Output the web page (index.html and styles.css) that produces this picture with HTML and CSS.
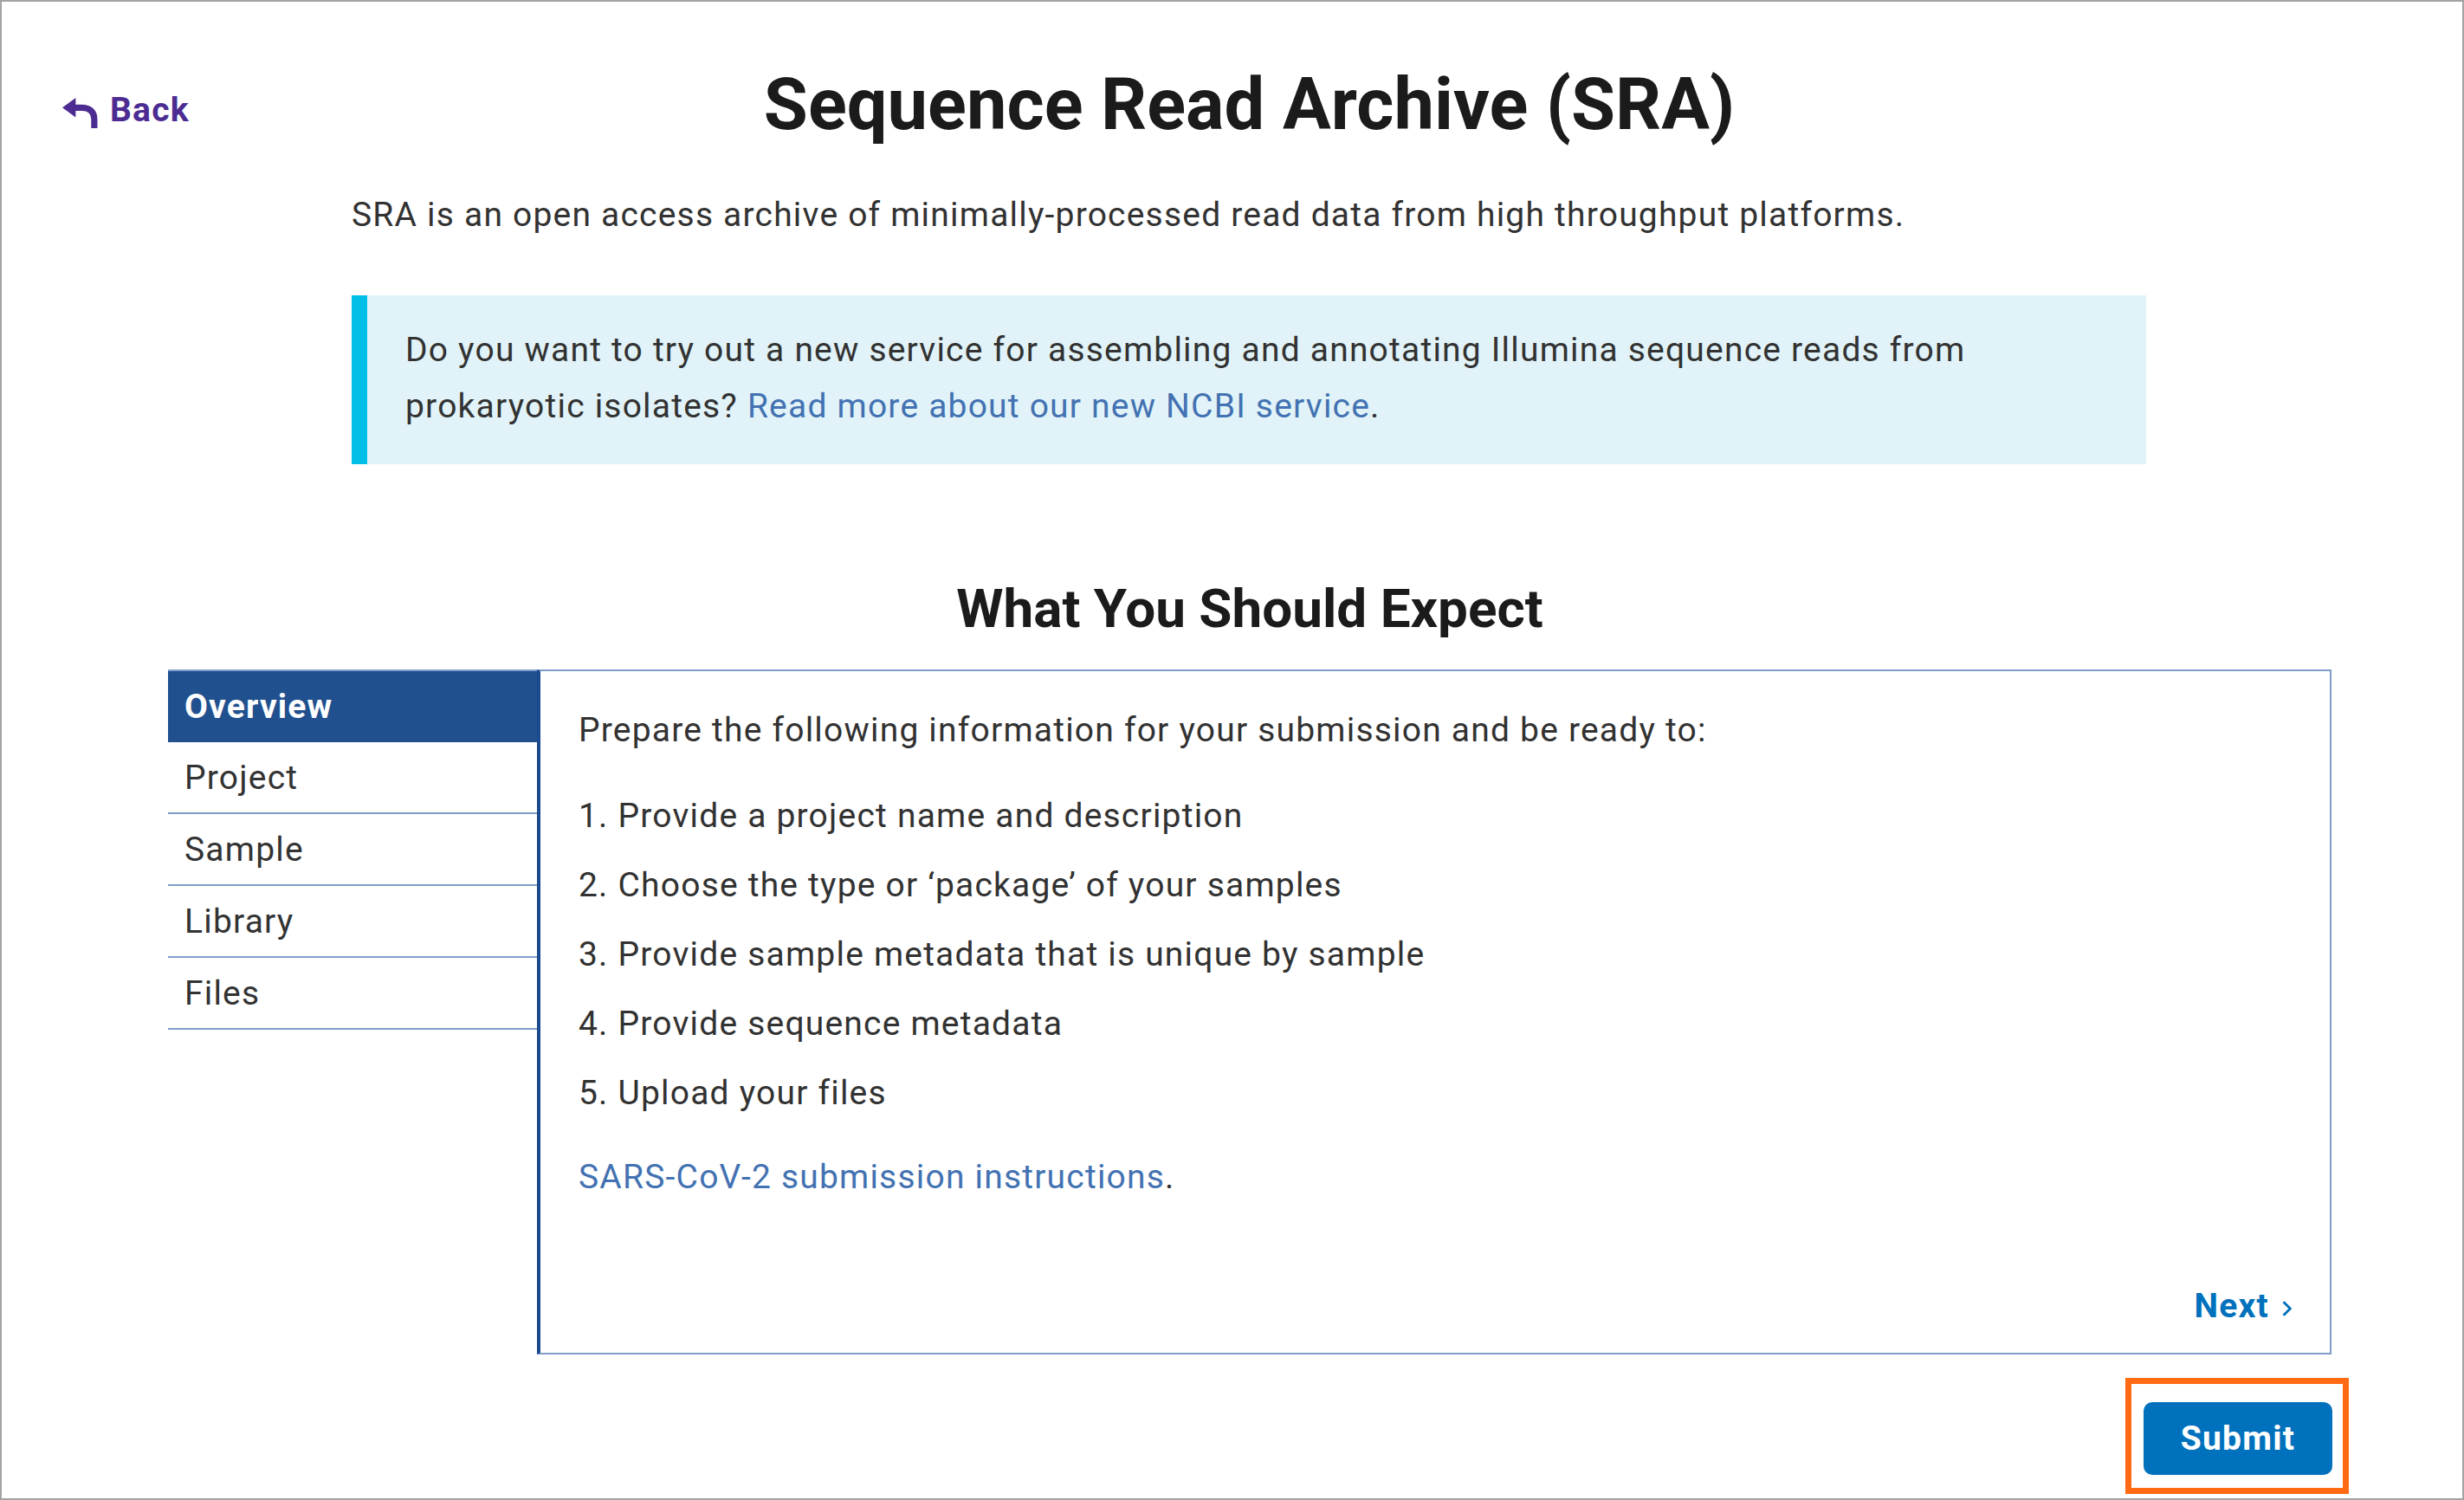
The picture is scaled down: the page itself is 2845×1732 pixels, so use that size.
FILE: index.html
```html
<!DOCTYPE html>
<html lang="en">
<head>
<meta charset="utf-8">
<title>Sequence Read Archive (SRA)</title>
<link rel="stylesheet" href="styles.css">
</head>
<body>
<div class="frame">
  <header class="header">
    <a class="back" href="#">
      <svg class="back-icon" viewBox="0 0 41 34" aria-hidden="true">
        <polygon points="0,11 15,0 15,22" fill="currentColor"/>
        <path d="M13 11 H22 C31 11 36 16 36 24 V34" fill="none" stroke="currentColor" stroke-width="7"/>
      </svg>
      <span>Back</span>
    </a>
    <h1 class="title">Sequence Read Archive (SRA)</h1>
    <span class="header-spacer"></span>
  </header>

  <main class="page">
    <section class="intro">
      <p class="lead">SRA is an open access archive of minimally-processed read data from high throughput platforms.</p>
      <div class="alert">
        <p>Do you want to try out a new service for assembling and annotating Illumina sequence reads from prokaryotic isolates? <a href="#">Read more about our new NCBI service</a>.</p>
      </div>
    </section>

    <h2 class="section-title">What You Should Expect</h2>

    <div class="tabs">
      <nav class="tab-nav">
        <a class="tab tab-active" href="#">Overview</a>
        <a class="tab" href="#">Project</a>
        <a class="tab" href="#">Sample</a>
        <a class="tab" href="#">Library</a>
        <a class="tab" href="#">Files</a>
      </nav>
      <div class="tab-panel">
        <p class="panel-intro">Prepare the following information for your submission and be ready to:</p>
        <ol class="steps">
          <li>Provide a project name and description</li>
          <li>Choose the type or ‘package’ of your samples</li>
          <li>Provide sample metadata that is unique by sample</li>
          <li>Provide sequence metadata</li>
          <li>Upload your files</li>
        </ol>
        <p class="panel-link"><a href="#">SARS-CoV-2 submission instructions</a>.</p>
        <div class="panel-footer">
          <a class="next" href="#">Next
            <svg class="next-icon" viewBox="0 0 12 18" aria-hidden="true">
              <path d="M2 2 L9 9 L2 16" fill="none" stroke="currentColor" stroke-width="2.6"/>
            </svg>
          </a>
        </div>
      </div>
    </div>

    <div class="actions">
      <div class="highlight">
        <button class="submit" type="button">Submit</button>
      </div>
    </div>
  </main>
</div>
</body>
</html>
```
FILE: styles.css
```css
* { box-sizing: border-box; }

html, body {
  margin: 0;
  padding: 0;
  background: #ffffff;
}

body {
  font-family: Roboto, "Liberation Sans", Arial, sans-serif;
  color: #333333;
  letter-spacing: 1.2px;
}

.frame {
  width: 2845px;
  height: 1732px;
  border: 2px solid #a3a3a3;
  overflow: hidden;
  display: flex;
  flex-direction: column;
  background: #ffffff;
}

/* Header */
.header {
  display: grid;
  grid-template-columns: 1fr auto 1fr;
  align-items: center;
  padding: 69px 30px 0 70px;
}

.back {
  justify-self: start;
  display: flex;
  align-items: center;
  gap: 13px;
  margin-top: 12px;
  color: #4c2c92;
  font-weight: 700;
  font-size: 39px;
  line-height: 50px;
  text-decoration: none;
}

.back-icon {
  width: 42px;
  height: 35px;
  margin-top: 6px;
}

.title {
  margin: 0;
  font-size: 83px;
  line-height: 100px;
  font-weight: 700;
  letter-spacing: 0;
  color: #1b1b1b;
  text-align: center;
}

/* Page body */
.page {
  display: flex;
  flex-direction: column;
  padding: 0 151px 0 192px;
}

.intro {
  margin: 0 214px 0 212px;
}

.lead {
  margin: 49px 0 0;
  font-size: 39px;
  line-height: 57px;
  color: #323232;
}

.alert {
  margin-top: 64px;
  background: #e1f3f8;
  border-left: 18px solid #02bfe7;
  padding: 31px 100px 34px 44px;
}

.alert p {
  margin: 0;
  font-size: 39px;
  line-height: 65px;
  color: #323232;
}

.alert a,
.panel-link a {
  color: #4372b2;
  text-decoration: none;
}

.section-title {
  margin: 128px 0 32px;
  font-size: 62px;
  line-height: 77px;
  font-weight: 700;
  letter-spacing: 0;
  color: #1b1b1b;
  text-align: center;
}

/* Tabs */
.tabs {
  display: grid;
  grid-template-columns: 426px 1fr;
}

.tab-nav {
  display: flex;
  flex-direction: column;
  border-top: 2px solid #7f9dc9;
}

.tab {
  display: block;
  height: 83px;
  padding: 0 0 0 19px;
  font-size: 39px;
  line-height: 83px;
  color: #333333;
  text-decoration: none;
  border-bottom: 2px solid #7f9dc9;
}

.tab-active {
  height: 82px;
  line-height: 82px;
  background: #21508f;
  color: #ffffff;
  font-weight: 700;
  border-bottom: none;
}

.tab-panel {
  display: flex;
  flex-direction: column;
  border: 2px solid #7f9dc9;
  border-left: 4px solid #1a4a8e;
  padding: 28px 40px 14px 44px;
  font-size: 39px;
  line-height: 80px;
  color: #323232;
}

.panel-intro {
  margin: 0 0 19px;
}

.steps {
  margin: 0;
  padding: 0;
  list-style: decimal inside;
}

.steps li {
  line-height: 80px;
}

.panel-link {
  margin: 17px 0 0;
}

.panel-footer {
  margin-top: 69px;
  display: flex;
  justify-content: flex-end;
}

.next {
  display: flex;
  align-items: center;
  gap: 14px;
  color: #0071bc;
  font-weight: 700;
  text-decoration: none;
  padding-right: 2px;
}

.next-icon {
  width: 14px;
  height: 20px;
  margin-top: 6px;
}

/* Submit */
.actions {
  display: flex;
  justify-content: flex-end;
  margin: 27px -20px 0 0;
}

.highlight {
  border: 7px solid #ff6a13;
  padding: 21px 12px 15px 14px;
}

.submit {
  display: block;
  width: 218px;
  height: 84px;
  border: none;
  border-radius: 10px;
  background: #0071bc;
  color: #ffffff;
  font-family: Roboto, "Liberation Sans", Arial, sans-serif;
  font-weight: 700;
  font-size: 39px;
  letter-spacing: 1.2px;
  cursor: pointer;
}
```
